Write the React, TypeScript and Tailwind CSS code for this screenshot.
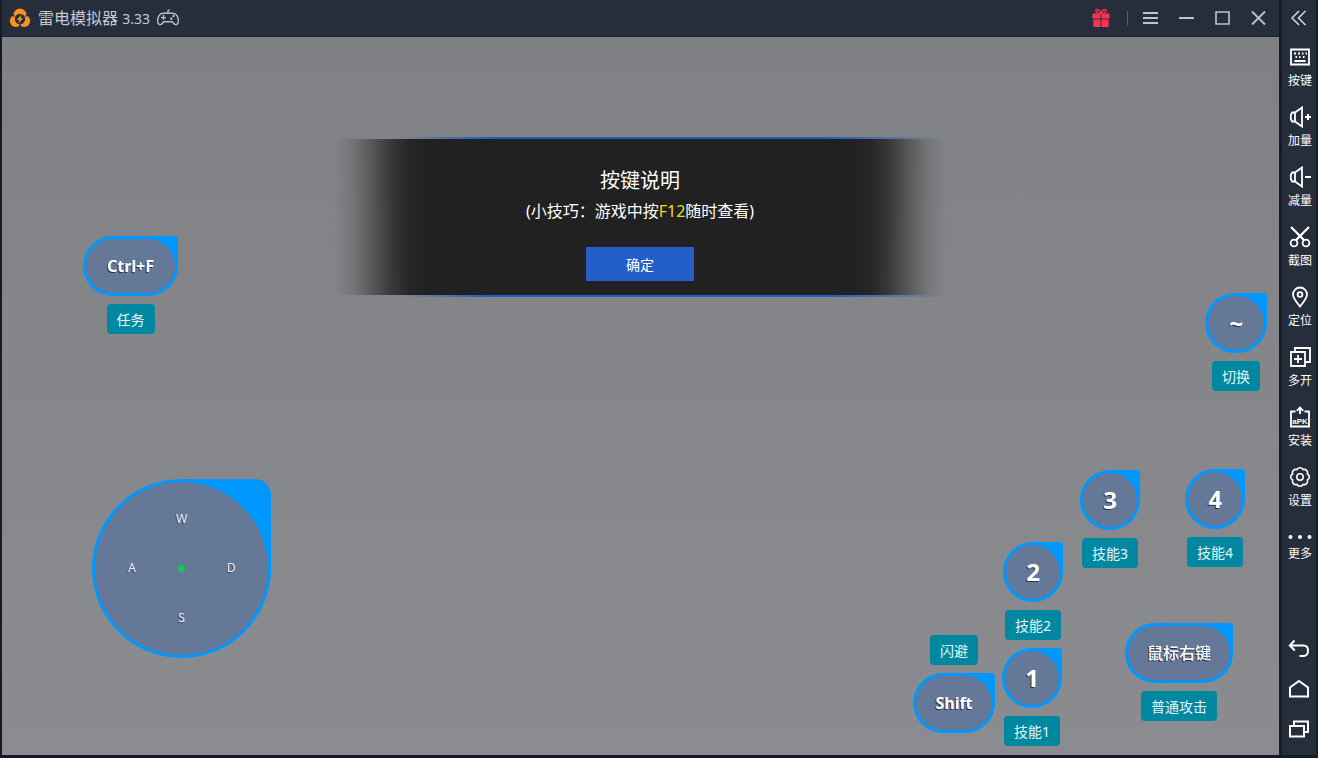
import type { ReactNode } from "react";

type IconProps = { children: ReactNode; className?: string };

function Icon({ children, className = "size-[22px]" }: IconProps) {
  return (
    <svg
      viewBox="0 0 22 22"
      className={className}
      fill="none"
      stroke="currentColor"
      strokeWidth="1.8"
      aria-hidden="true"
    >
      {children}
    </svg>
  );
}

function Logo() {
  return (
    <svg viewBox="0 0 22 20" className="h-5 w-[22px]" aria-hidden="true">
      <g fill="#f7931e">
        <circle cx="11" cy="7" r="6.5" />
        <circle cx="6.8" cy="13" r="6" />
        <circle cx="15.2" cy="13" r="6" />
      </g>
      <circle cx="11" cy="11" r="5.2" fill="#262e3c" />
      <path d="M11 14v6M5.5 8.5 3 6.5M16.5 8.5 19 6.5" stroke="#262e3c" strokeWidth="1.6" />
      <path d="m12.6 6.6-5 5.2h2.6l-1 3.8 5-5.4h-2.8z" fill="#f7931e" />
    </svg>
  );
}

function Gamepad() {
  return (
    <svg
      viewBox="0 0 24 18"
      className="h-[18px] w-6 text-[#b9bec6]"
      fill="none"
      stroke="currentColor"
      strokeWidth="1.4"
      aria-hidden="true"
    >
      <path d="M7 4.2h10c3.4 0 5.4 4 5.4 8 0 3.6-3.2 4.6-5 1.8l-1-1.3H7.6l-1 1.3c-1.8 2.8-5 1.8-5-1.8 0-4 2-8 5.4-8z" />
      <path d="M12 4V2.3c0-1 .6-1.3 1.8-1.3M5 8.6h5M7.5 6.1v5" />
      <circle cx="17.5" cy="7" r="1.2" fill="currentColor" stroke="none" />
      <circle cx="15.2" cy="9.8" r="1.2" fill="currentColor" stroke="none" />
    </svg>
  );
}

function Gift() {
  return (
    <svg viewBox="0 0 18 20" className="h-5 w-[18px]" fill="#fb3251" aria-hidden="true">
      <path d="M1 5.5h7.5v5H.5V6zM9.5 5.5H17l.5.5v4.5h-8zM1.3 11.5h7.2v7.5H2l-.7-.7zM9.5 11.5h7.2v6.8l-.7.7H9.5z" />
      <path
        d="M9 5.5C5 5 3.2 3.8 4 2.2 5 .4 8.2 2 9 5.5 9.8 2 13 .4 14 2.2c.8 1.6-1 2.8-5 3.3z"
        fill="none"
        stroke="#fb3251"
        strokeWidth="1.4"
      />
    </svg>
  );
}

const speaker = (
  <>
    <path d="M6 6.5 13 1.500v19L6 15.5z" />
    <path d="M6 6.5H3.2L1.8 9v4l1.4 2.5H6" />
  </>
);

const tools: { label: string; icon: ReactNode }[] = [
  {
    label: "按键",
    icon: (
      <Icon>
        <path d="M2 3.5h18v15H2z" />
        <path d="M5 7.5h2M9 7.5h2M13 7.5h1.5M16.5 7.5H18M6.5 11h1.5M10 11h1.5M14 11h1.5M5.5 15h11" />
      </Icon>
    ),
  },
  {
    label: "加量",
    icon: (
      <Icon>
        {speaker}
        <path d="M16 11h6M19 8v6" strokeWidth="2" />
      </Icon>
    ),
  },
  {
    label: "减量",
    icon: (
      <Icon>
        {speaker}
        <path d="M16 11h6" strokeWidth="2" />
      </Icon>
    ),
  },
  {
    label: "截图",
    icon: (
      <Icon>
        <circle cx="5" cy="17" r="3.4" />
        <circle cx="17" cy="17" r="3.4" />
        <path d="m7 14.3 4-4.3 9-9M15 14.3 11 10 2 1" strokeWidth="2.2" />
      </Icon>
    ),
  },
  {
    label: "定位",
    icon: (
      <Icon>
        <path d="M11 20.500C7 15.7 4 12 4 8.500a7 7 0 0 1 14 0c0 3.500-3 7.200-7 12z" />
        <circle cx="11" cy="8.5" r="2.4" />
      </Icon>
    ),
  },
  {
    label: "多开",
    icon: (
      <Icon>
        <path d="M2 6h14v14H2zM6 5.5V2h15v14h-4.500M5 13h8M9 9v8" />
      </Icon>
    ),
  },
  {
    label: "安装",
    icon: (
      <Icon>
        <path d="M6.500 5.500H2V20.500h18V5.500h-4.500M11 8V2M7.800 4.800 11 1.600l3.200 3.200" />
        <text
          x="11"
          y="17.500"
          textAnchor="middle"
          fill="currentColor"
          stroke="none"
          className="font-['Liberation_Sans',sans-serif] text-[8px] font-bold"
        >
          aPK
        </text>
      </Icon>
    ),
  },
  {
    label: "设置",
    icon: (
      <Icon>
        <path
          d="M18.400 14.060A3.400 3.400 0 0 1 14.060 18.400A3.400 3.400 0 0 1 7.940 18.400A3.400 3.400 0 0 1 3.600 14.060A3.400 3.400 0 0 1 3.600 7.940A3.400 3.400 0 0 1 7.940 3.600A3.400 3.400 0 0 1 14.060 3.600A3.400 3.400 0 0 1 18.400 7.940A3.400 3.400 0 0 1 18.400 14.060z"
          strokeWidth="1.6"
        />
        <circle cx="11" cy="11" r="3.2" strokeWidth="1.5" />
      </Icon>
    ),
  },
];

const keyBase =
  "flex h-[60px] rounded-[30px] rounded-tr-[4px] bg-[#0098ff] p-[3px] text-white";

const keys: {
  text: string;
  label: string;
  place: string;
  width: string;
  size: string;
  labelFirst?: boolean;
}[] = [
  { text: "Ctrl+F", label: "任务", place: "left-[81px] top-[199px]", width: "w-[95px]", size: "text-base font-bold" },
  { text: "~", label: "切换", place: "right-[12px] top-[256px]", width: "w-[62px]", size: "text-2xl font-bold" },
  { text: "3", label: "技能3", place: "right-[139px] top-[433px]", width: "w-[60px]", size: "text-2xl font-bold" },
  { text: "4", label: "技能4", place: "right-[34px] top-[432px]", width: "w-[60px]", size: "text-2xl font-bold" },
  { text: "2", label: "技能2", place: "right-[216px] top-[505px]", width: "w-[60px]", size: "text-2xl font-bold" },
  { text: "1", label: "技能1", place: "right-[217px] top-[611px]", width: "w-[60px]", size: "text-2xl font-bold" },
  {
    text: "Shift",
    label: "闪避",
    place: "right-[284px] top-[598px]",
    width: "w-[82px]",
    size: "text-base font-bold",
    labelFirst: true,
  },
  {
    text: "鼠标右键",
    label: "普通攻击",
    place: "right-[46px] top-[586px]",
    width: "w-[108px]",
    size: "text-base font-medium",
  },
];

function KeyMarkers() {
  return keys.map((k) => (
    <div
      key={k.label}
      className={`absolute flex items-center gap-2 ${k.labelFirst ? "flex-col-reverse" : "flex-col"} ${k.place}`}
    >
      <button type="button" className={`${keyBase} ${k.width}`}>
        <span
          className={`flex h-full flex-1 items-center justify-center rounded-full bg-[#667897] [text-shadow:-1px_1px_0_#26324e] ${k.size}`}
        >
          {k.text}
        </span>
      </button>
      <span className="rounded-[4px] bg-[#0088a1] px-2.5 pt-0.5 text-sm leading-7 text-[#e4f6f9]">
        {k.label}
      </span>
    </div>
  ));
}

function Joystick() {
  return (
    <div className="absolute left-[90px] top-[442px] size-[179px] rounded-[90px] rounded-tr-[16px] bg-[#0098ff] p-[3px]">
      <div className="grid size-full grid-cols-3 grid-rows-3 place-items-center rounded-full bg-[#667897] p-3 text-xs text-[#edf0f5] [text-shadow:-1px_1px_0_#3c4a68]">
        <span className="col-start-2">W</span>
        <span className="col-start-1 row-start-2">A</span>
        <span className="col-start-2 row-start-2 size-[7px] rounded-full bg-[#19c553]" />
        <span className="col-start-3 row-start-2">D</span>
        <span className="col-start-2 row-start-3">S</span>
      </div>
    </div>
  );
}

function Notice() {
  const line =
    "h-[2px] bg-[linear-gradient(90deg,transparent_12%,#235bc5_26%,#235bc5_80%,transparent_99%)]";
  return (
    <section role="dialog" aria-labelledby="notice-title" className="flex w-[624px] max-w-full flex-col">
      <div className={line} />
      <div className="flex flex-col items-center bg-[linear-gradient(90deg,transparent_1%,#21212126_4%,#21212170_7%,#212121c0_10%,#212121f0_13%,#212121_16%,#212121_84%,#212121f0_87%,#212121c0_90%,#21212170_93%,#21212126_96%,transparent_99%)] pb-3.5 pt-7 text-white">
        <h1 id="notice-title" className="text-xl leading-7">
          按键说明
        </h1>
        <p className="mt-1 text-base leading-6">
          (小技巧：游戏中按<span className="text-[#f4dc1c]">F12</span>随时查看)
        </p>
        <button type="button" className="mt-6 h-[34px] w-[108px] bg-[#235fc8] pt-0.5 text-sm">
          确定
        </button>
      </div>
      <div className={line} />
    </section>
  );
}

function WindowButton({ label, children }: { label: string; children: ReactNode }) {
  return (
    <button type="button" aria-label={label} className="flex h-9 w-9 items-center justify-center text-[#bfc4cc]">
      <Icon>{children}</Icon>
    </button>
  );
}

function TitleBar() {
  return (
    <header className="flex items-center justify-between border-b border-[#1a212d] bg-[#262e3c] pl-[7px] pr-[3px]">
      <div className="flex items-center">
        <Logo />
        <span className="ml-[7px] text-base leading-6 text-[#c5c9d0]">
          雷电模拟器 <span className="text-sm">3.33</span>
        </span>
        <span className="ml-1.5">
          <Gamepad />
        </span>
      </div>
      <div className="flex items-center">
        <button type="button" aria-label="礼包" className="flex h-9 w-9 items-center justify-center">
          <Gift />
        </button>
        <span className="ml-2 mr-1 h-3.5 w-px bg-[#566070]" />
        <WindowButton label="菜单">
          <path d="M4 6h15M4 11h15M4 16h15" strokeWidth="2" />
        </WindowButton>
        <WindowButton label="最小化">
          <path d="M4 11h15" strokeWidth="2" />
        </WindowButton>
        <WindowButton label="最大化">
          <path d="M5 5h13v12H5z" strokeWidth="1.6" />
        </WindowButton>
        <WindowButton label="关闭">
          <path d="m5 4.5 13 13M18 4.5l-13 13" />
        </WindowButton>
      </div>
    </header>
  );
}

function NavButton({ label, children }: { label: string; children: ReactNode }) {
  return (
    <button type="button" aria-label={label} className="flex h-10 w-full items-center justify-center">
      <Icon>{children}</Icon>
    </button>
  );
}

function Sidebar() {
  return (
    <aside className="flex w-[34px] shrink-0 flex-col items-center bg-[#262e3c] text-white">
      <button type="button" aria-label="收起" className="flex h-9 w-full items-center justify-center text-[#d5d9df]">
        <Icon>
          <path d="M11 4 4 11l7 7M17.5 4l-7 7 7 7" strokeWidth="1.5" />
        </Icon>
      </button>
      <div className="flex w-full flex-col pl-0.5 pt-2">
        {tools.map((t) => (
          <button
            key={t.label}
            type="button"
            className="flex h-[60px] w-full flex-col items-center gap-[5px] whitespace-nowrap pt-0.5 text-xs"
          >
            {t.icon}
            {t.label}
          </button>
        ))}
        <button type="button" className="flex w-full flex-col items-center gap-1.5 whitespace-nowrap pt-2.5 text-xs">
          <svg viewBox="0 0 24 6" className="h-1.5 w-6" fill="currentColor" aria-hidden="true">
            <circle cx="2.5" cy="3" r="2" />
            <circle cx="12" cy="3" r="2" />
            <circle cx="21.5" cy="3" r="2" />
          </svg>
          更多
        </button>
      </div>
      <nav className="mt-auto flex w-full flex-col pb-1.5">
        <NavButton label="返回">
          <path d="M6.5 2.5 1.8 7.5l5 5M2 7.5h13.5c3 0 4.5 2 4.5 5s-1.5 5.5-4.5 5.5H11.5" strokeWidth="2" />
        </NavButton>
        <NavButton label="主页">
          <path d="M2 18.5V9.5L11 3l9 6.5v9z" strokeWidth="2" />
        </NavButton>
        <NavButton label="多任务">
          <path d="M2 8h14v10.5H2zM6 7.5v-4h14V14h-4" strokeWidth="2" />
        </NavButton>
      </nav>
    </aside>
  );
}

export default function App() {
  return (
    <div className="flex min-h-screen gap-[3px] bg-[#151c27] px-[2px] pb-[3px] font-['Noto_Sans','Noto_Sans_CJK_SC',sans-serif]">
      <div className="flex min-w-0 flex-1 flex-col">
        <TitleBar />
        <main className="relative flex flex-1 flex-col items-center bg-linear-to-b from-[#808184] to-[#8b8c8f] pr-px pt-[100px]">
          <Notice />
          <KeyMarkers />
          <Joystick />
        </main>
      </div>
      <Sidebar />
    </div>
  );
}
